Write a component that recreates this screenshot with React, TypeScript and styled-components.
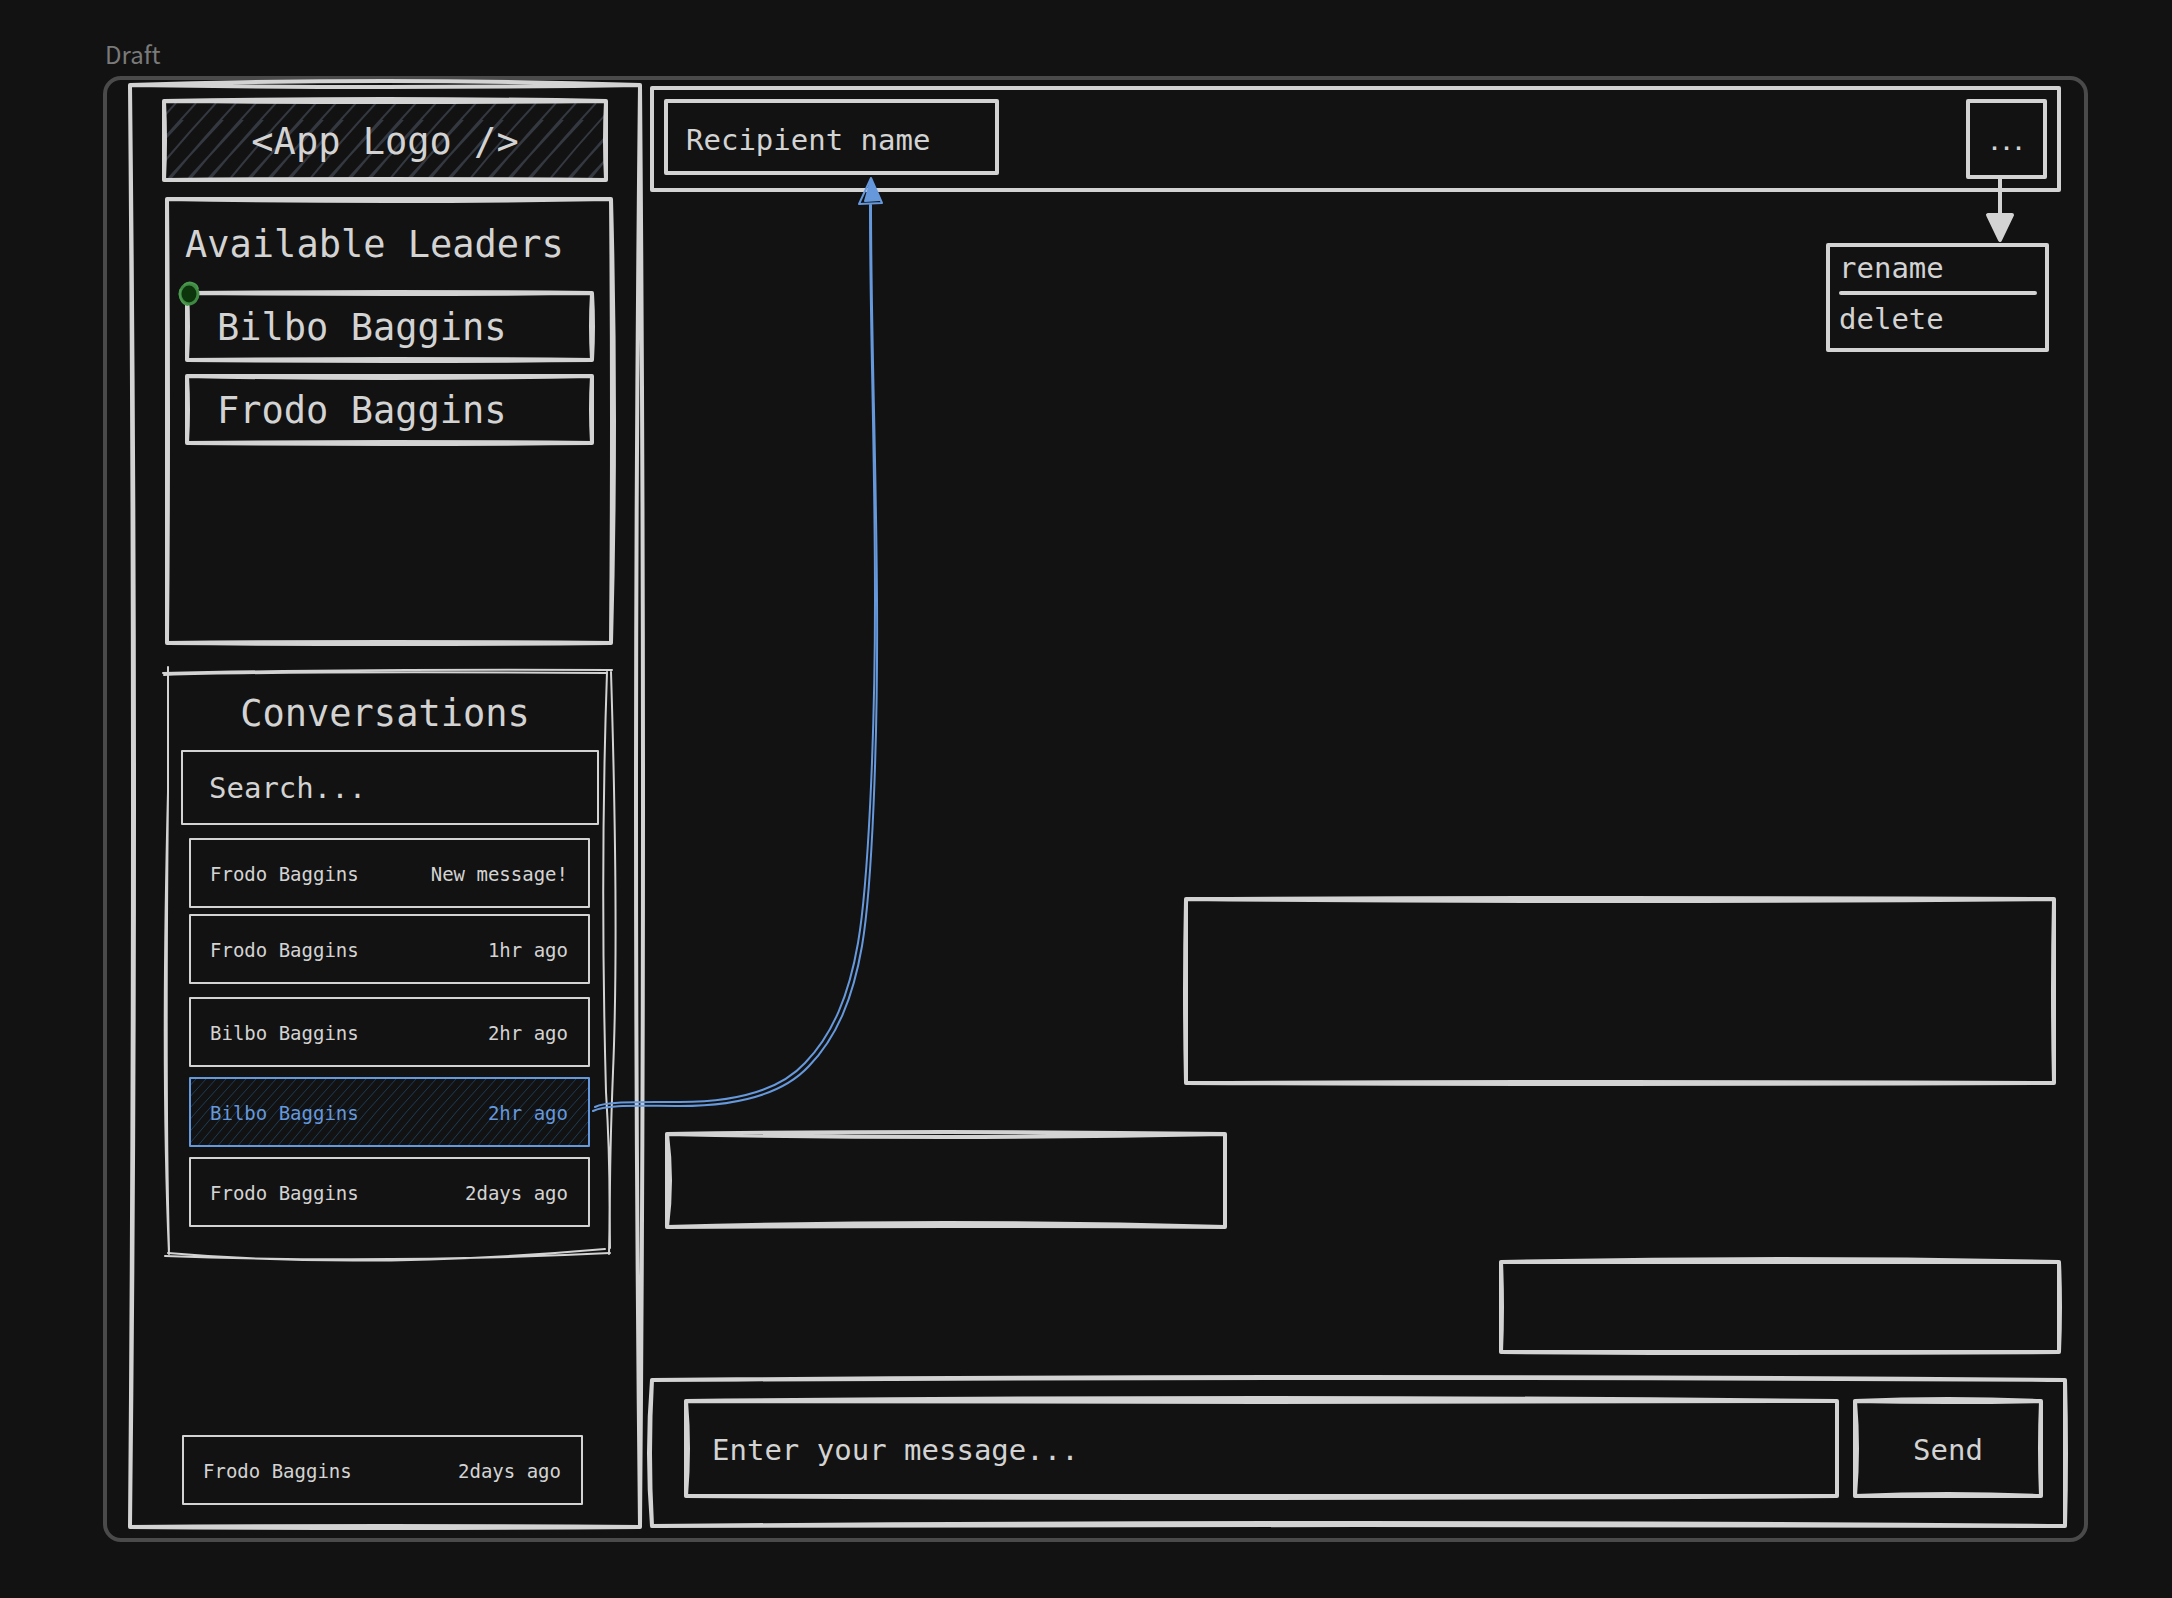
import React from "react";
import styled, { createGlobalStyle } from "styled-components";

const ink = "#d3d3d3";
const paper = "#121212";
const blue = "#6698dc";
const mono = `"DejaVu Sans Mono", "Liberation Mono", monospace`;

const GlobalStyle = createGlobalStyle`
  *, *::before, *::after { box-sizing: border-box; }
  body { margin: 0; background: ${paper}; }
  button, input { font: inherit; color: inherit; }
`;

/* ---------- hand-drawn outlines ---------- */

type Bows = [number, number];

interface OutlineProps {
  w: number;
  h: number;
  top?: Bows;
  right?: Bows;
  bottom?: Bows;
  left?: Bows;
}

const Overlay = styled.svg`
  position: absolute;
  inset: -4px;
  width: calc(100% + 8px);
  height: calc(100% + 8px);
  overflow: visible;
  pointer-events: none;
  fill: none;
  stroke: ${ink};
  stroke-width: 4px;
  stroke-linecap: round;

  path {
    vector-effect: non-scaling-stroke;
  }
`;

/* Every side is drawn twice, each pass bending by its own amount. */
function Outline({ w, h, top = [0, 0], right = [0, 0], bottom = [0, 0], left = [0, 0] }: OutlineProps) {
  const a = 2;
  const x = w - a;
  const y = h - a;
  const d = [0, 1]
    .map(
      (i) =>
        `M${a} ${a}Q${w / 2} ${a + top[i] * 2} ${x} ${a}` +
        `M${x} ${a}Q${x + right[i] * 2} ${h / 2} ${x} ${y}` +
        `M${x} ${y}Q${w / 2} ${y + bottom[i] * 2} ${a} ${y}` +
        `M${a} ${y}Q${a + left[i] * 2} ${h / 2} ${a} ${a}`
    )
    .join("");
  return (
    <Overlay viewBox={`0 0 ${w} ${h}`} preserveAspectRatio="none" aria-hidden="true">
      <path d={d} />
    </Overlay>
  );
}

const HatchSvg = styled.svg<{ $color: string; $weight: number }>`
  position: absolute;
  inset: 0;
  width: 100%;
  height: 100%;
  stroke: ${(p) => p.$color};
  stroke-width: ${(p) => p.$weight}px;
  fill: none;
`;

interface HatchProps {
  w: number;
  h: number;
  step: number;
  color: string;
  weight: number;
  doubled?: boolean;
}

function Hatch({ w, h, step, color, weight, doubled }: HatchProps) {
  const run = h * 0.87;
  const lines: string[] = [];
  for (let x = -run + step / 2, i = 0; x < w; x += step, i++) {
    lines.push(`M${x} ${h}Q${x + run / 2 - 2} ${h / 2} ${x + run} 0`);
    if (doubled && i % 4 !== 2) {
      lines.push(`M${x - 2} ${h}L${x + run * 0.8} ${h * 0.22}`);
    }
  }
  return (
    <HatchSvg viewBox={`0 0 ${w} ${h}`} preserveAspectRatio="none" $color={color} $weight={weight} aria-hidden="true">
      <path d={lines.join("")} />
    </HatchSvg>
  );
}

/* ---------- page ---------- */

const Page = styled.div`
  display: flex;
  flex-direction: column;
  min-height: 100vh;
  padding: 36px 84px 56px 103px;
  color: ${ink};
  font-family: ${mono};
  font-size: 29px;
  line-height: 36px;
`;

const FrameName = styled.div`
  margin-bottom: 4px;
  padding-left: 2px;
  color: #7a7a7a;
  font-family: "Noto Sans CJK JP", "Noto Sans", sans-serif;
  font-size: 24px;
`;

const Frame = styled.div`
  position: relative;
  flex: 1;
  display: grid;
  grid-template-columns: 514px minmax(0, 1fr);
  gap: 8px;
  padding: 3px 17px 9px 21px;
  border: 4px solid #4a4a4a;
  border-radius: 18px;
`;

const SketchBox = styled.div`
  position: relative;
  border: 4px solid transparent;
`;

/* ---------- sidebar ---------- */

const Sidebar = styled(SketchBox).attrs({ as: "aside" })`
  display: flex;
  flex-direction: column;
  padding: 12px 25px 20px 30px;
`;

const Logo = styled(SketchBox)`
  display: flex;
  align-items: center;
  justify-content: center;
  height: 83px;
  margin: 0 5px 15px 0;
  padding-top: 2px;
  font-size: 37px;
  line-height: 44px;
`;

const LogoText = styled.span`
  position: relative;
`;

const Heading = styled.h2`
  margin: 0;
  font-size: 37px;
  font-weight: 400;
  line-height: 44px;
`;

const Leaders = styled(SketchBox).attrs({ as: "section" })`
  min-height: 448px;
  margin: 0 0 27px 3px;
  padding: 22px 15px 15px 16px;
`;

const LeaderList = styled.div`
  display: grid;
  gap: 12px;
  margin-top: 24px;
`;

const Leader = styled.button`
  position: relative;
  height: 71px;
  padding: 2px 28px 0;
  border: 4px solid transparent;
  background: none;
  font-size: 37px;
  line-height: 44px;
  text-align: left;
`;

const Online = styled.svg`
  position: absolute;
  top: -15px;
  left: -13px;
  width: 26px;
  height: 28px;
`;

const Conversations = styled.section`
  position: relative;
  margin-left: 3px;
  padding: 20px 14px 28px 16px;
`;

const CentredHeading = styled(Heading)`
  padding-right: 10px;
  text-align: center;
`;

const LooseOutline = styled(Overlay)`
  inset: 0;
  width: 100%;
  height: 100%;
  stroke-width: 2px;
`;

const Search = styled.input`
  display: block;
  width: 100%;
  height: 75px;
  margin-top: 14px;
  padding: 0 26px;
  border: 2px solid ${ink};
  border-radius: 1px;
  outline: none;
  background: none;

  &::placeholder {
    color: ${ink};
    opacity: 1;
  }
`;

const List = styled.div`
  margin: 13px 9px 0 8px;
`;

const Row = styled.button<{ $active?: boolean; $gap?: number }>`
  position: relative;
  display: flex;
  align-items: center;
  justify-content: space-between;
  width: 100%;
  height: 70px;
  margin-bottom: ${(p) => p.$gap ?? 0}px;
  padding: 2px 20px 0 19px;
  border: 2px solid ${(p) => (p.$active ? blue : ink)};
  border-radius: 1px;
  background: none;
  color: ${(p) => (p.$active ? blue : ink)};
  font-size: 19px;
  line-height: 24px;

  span {
    position: relative;
  }
`;

const Pinned = styled.div`
  width: 401px;
  margin: auto 0 0 20px;
`;

/* ---------- main column ---------- */

const Main = styled.main`
  display: flex;
  flex-direction: column;
  min-width: 0;
  padding: 3px 0 1px;
`;

const Header = styled.header`
  display: flex;
  align-items: flex-start;
  justify-content: space-between;
  margin-right: 6px;
  padding: 9px 10px;
  border: 4px solid ${ink};
  border-radius: 2px;
`;

const Recipient = styled.div`
  width: 335px;
  height: 76px;
  padding: 19px 18px 0;
  border: 4px solid ${ink};
  border-radius: 2px;
`;

const MenuAnchor = styled.div`
  position: relative;
`;

const MenuButton = styled.button`
  display: block;
  width: 81px;
  height: 80px;
  padding: 8px 0 0;
  border: 4px solid ${ink};
  border-radius: 2px;
  background: none;
  font-size: 20px;
  font-weight: 700;
`;

const MenuArrow = styled.svg`
  position: absolute;
  top: 79px;
  left: 19px;
  width: 30px;
  height: 66px;
  fill: ${ink};
  stroke: ${ink};
  stroke-linejoin: round;
`;

const Menu = styled.div`
  position: absolute;
  top: 144px;
  right: -2px;
  width: 223px;
  padding: 3px 8px 11px 9px;
  border: 4px solid ${ink};
  border-radius: 2px;
  background: ${paper};
`;

const MenuItem = styled.button`
  display: block;
  width: 100%;
  padding: 0;
  border: 0;
  background: none;
  text-align: left;
`;

const Divider = styled.hr`
  height: 4px;
  margin: 5px 0 6px;
  border: 0;
  border-radius: 2px;
  background: ${ink};
`;

const Thread = styled.div`
  flex: 1;
  display: flex;
  flex-direction: column;
  justify-content: flex-end;
  padding: 0 6px 24px 15px;
`;

const Bubble = styled(SketchBox)<{ $mine?: boolean; $size: "small" | "large" }>`
  align-self: ${(p) => (p.$mine ? "flex-end" : "flex-start")};
  width: ${(p) => (p.$size === "large" ? 872 : 562)}px;
  max-width: 100%;
  min-height: ${(p) => (p.$size === "large" ? 188 : 94)}px;
  margin: ${(p) => (p.$size === "large" ? "0 5px 47px 0" : "0")};
`;

const Reply = styled(Bubble)`
  min-height: 97px;
  margin-bottom: 31px;
`;

const Composer = styled.form`
  position: relative;
  display: flex;
  gap: 14px;
  padding: 17px 20px 26px 30px;
  border: 4px solid transparent;
`;

const MessageField = styled(SketchBox)`
  flex: 1;
  height: 99px;
`;

const MessageInput = styled.input`
  display: block;
  width: 100%;
  height: 100%;
  padding: 2px 24px 0;
  border: 0;
  outline: none;
  background: none;

  &::placeholder {
    color: ${ink};
    opacity: 1;
  }
`;

const Send = styled.button`
  position: relative;
  width: 190px;
  height: 99px;
  padding: 2px 0 0;
  border: 4px solid transparent;
  background: none;
`;

const Connector = styled.svg`
  position: absolute;
  top: 0;
  left: 0;
  width: 800px;
  height: 1100px;
  pointer-events: none;
  fill: none;
  stroke: ${blue};
  stroke-width: 2px;
  stroke-linecap: round;
  stroke-linejoin: round;
`;

const conversations = [
  { name: "Frodo Baggins", note: "New message!", gap: 6 },
  { name: "Frodo Baggins", note: "1hr ago", gap: 13 },
  { name: "Bilbo Baggins", note: "2hr ago", gap: 10 },
  { name: "Bilbo Baggins", note: "2hr ago", gap: 10, active: true },
  { name: "Frodo Baggins", note: "2days ago", gap: 0 },
];

export default function App() {
  return (
    <>
      <GlobalStyle />
      <Page>
        <FrameName>Draft</FrameName>
        <Frame>
          <Sidebar>
            <Outline w={514} h={1446} top={[-4, 2]} right={[-4, 3]} bottom={[-1, 1]} left={[4, 3]} />
            <Logo>
              <Hatch w={438} h={75} step={20} color="#343840" weight={2} doubled />
              <Outline w={446} h={83} top={[-2, 1]} right={[0, -1]} bottom={[-1, 0]} left={[0, 1]} />
              <LogoText>{"<App Logo />"}</LogoText>
            </Logo>

            <Leaders>
              <Outline w={448} h={448} top={[0, 2]} right={[3, 1]} bottom={[-1, 1]} left={[0, 1]} />
              <Heading>Available Leaders</Heading>
              <LeaderList>
                <Leader type="button">
                  <Outline w={409} h={71} top={[-1, 1]} right={[1, -1]} bottom={[-1, 1]} left={[0, 1]} />
                  <Online viewBox="0 0 26 28" aria-hidden="true">
                    <ellipse cx="13" cy="14" rx="9" ry="10" fill="#0c350c" stroke="#3f8a42" strokeWidth="3" />
                    <path d="M8 5C12 1 21 2 22 9M5 9C2 15 5 24 12 25" fill="none" stroke="#4b994e" strokeWidth="2" />
                  </Online>
                  Bilbo Baggins
                </Leader>
                <Leader type="button">
                  <Outline w={409} h={71} top={[0, 2]} right={[0, -1]} bottom={[-1, 1]} left={[0, 1]} />
                  Frodo Baggins
                </Leader>
              </LeaderList>
            </Leaders>

            <Conversations>
              <LooseOutline viewBox="0 0 448 583" preserveAspectRatio="none" aria-hidden="true">
                <path d="M-2 1Q180 -3 447 -2M-1 3Q120 -1 441 1" />
                <path d="M3 -5L3 120Q-4 400 4 582M3 120Q0 420 4 578" />
                <path d="M442 0Q435 200 441 420Q446 500 444 582M446 0Q454 260 448 400Q444 500 445 576" />
                <path d="M0 584Q220 592 445 581M3 581Q200 598 440 577" />
              </LooseOutline>
              <CentredHeading>Conversations</CentredHeading>
              <Search type="search" aria-label="Search conversations" placeholder="Search..." />
              <List>
                {conversations.map((c, i) => (
                  <Row key={i} type="button" $active={c.active} $gap={c.gap}>
                    {c.active && <Hatch w={397} h={66} step={10} color="#1d3d58" weight={1} />}
                    <span>{c.name}</span>
                    <span>{c.note}</span>
                  </Row>
                ))}
              </List>
            </Conversations>

            <Pinned>
              <Row type="button">
                <span>Frodo Baggins</span>
                <span>2days ago</span>
              </Row>
            </Pinned>
          </Sidebar>

          <Main>
            <Header>
              <Recipient>Recipient name</Recipient>
              <MenuAnchor>
                <MenuButton type="button" aria-label="More options">...</MenuButton>
                <Menu>
                  <MenuItem type="button">rename</MenuItem>
                  <Divider />
                  <MenuItem type="button">delete</MenuItem>
                </Menu>
                <MenuArrow viewBox="0 0 30 66" aria-hidden="true">
                  <path d="M15 0V40" strokeWidth="4" />
                  <path d="M3 37H27L15 62Z" strokeWidth="4" />
                </MenuArrow>
              </MenuAnchor>
            </Header>

            <Thread>
              <Bubble $mine $size="large">
                <Outline w={872} h={188} top={[-1, 2]} right={[0, -1]} bottom={[-1, 1]} left={[-1, 0]} />
              </Bubble>
              <Reply $size="small">
                <Outline w={562} h={97} top={[-2, 3]} right={[0, 0]} bottom={[-4, -1]} left={[0, 3]} />
              </Reply>
              <Bubble $mine $size="small">
                <Outline w={562} h={94} top={[-3, 0]} right={[1, 0]} bottom={[0, 1]} left={[0, 1]} />
              </Bubble>
            </Thread>

            <Composer onSubmit={(e) => e.preventDefault()}>
              <Outline w={1417} h={150} top={[-3, -2]} right={[1, 0]} bottom={[-3, -1]} left={[-3, -2]} />
              <MessageField>
                <Outline w={1155} h={99} top={[-3, 1]} right={[0, 0]} bottom={[2, 0]} left={[0, 2]} />
                <MessageInput type="text" aria-label="Message" placeholder="Enter your message..." />
              </MessageField>
              <Send type="submit">
                <Outline w={190} h={99} top={[-2, 1]} right={[-1, 0]} bottom={[-2, 0]} left={[0, 2]} />
                Send
              </Send>
            </Composer>
          </Main>

          {/* active conversation -> recipient name */}
          <Connector viewBox="107 80 800 1100" aria-hidden="true">
            <path d="M595 1107C606 1101 640 1102 680 1102C735 1102 780 1090 805 1063C833 1034 849 995 858 943C868 885 875 740 875 600C875 450 870 330 870 205" />
            <path d="M593 1111C606 1104 640 1106 680 1106C739 1106 784 1093 809 1066C837 1037 853 998 862 946C872 888 878 740 877 600C876 450 871 330 871 205" />
            <path d="M871 178L859 204L882 203Z" />
            <path d="M871 180L865 201L880 200Z" fill={blue} />
          </Connector>
        </Frame>
      </Page>
    </>
  );
}
